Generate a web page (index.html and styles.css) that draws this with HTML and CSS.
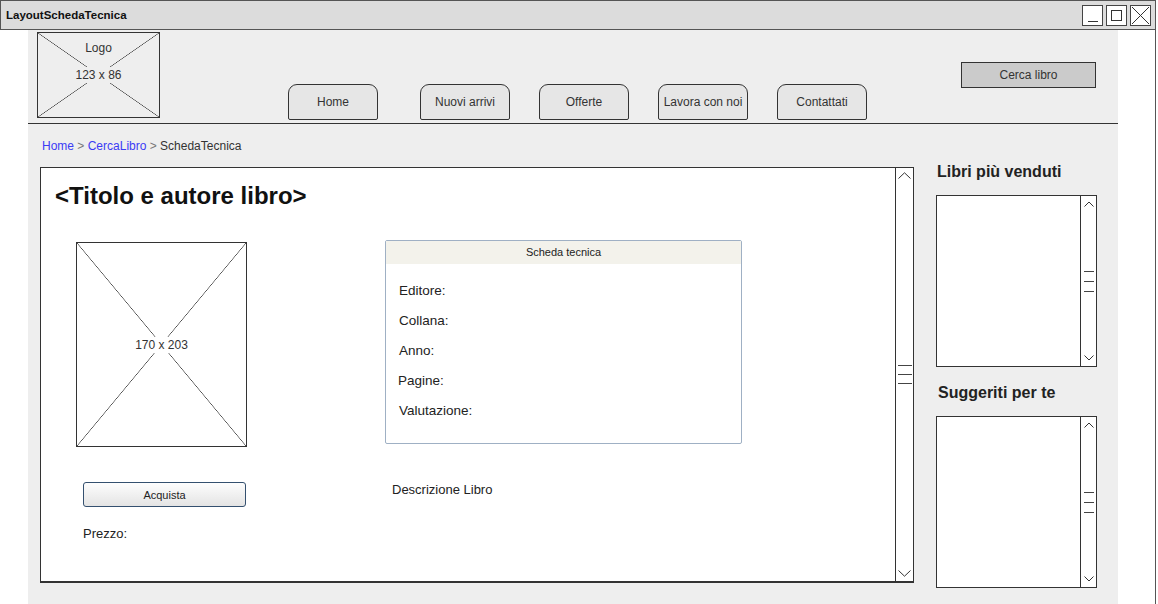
FILE: index.html
```html
<!DOCTYPE html>
<html lang="it">
<head>
<meta charset="utf-8">
<title>LayoutSchedaTecnica</title>
<link rel="stylesheet" href="styles.css">
</head>
<body>
<div class="window">
  <div class="titlebar">
    <span class="wtitle">LayoutSchedaTecnica</span>
    <div class="wctrls">
      <span class="wbtn"><svg viewBox="0 0 19 19"><line x1="5" y1="15.5" x2="15" y2="15.5" stroke="#333" stroke-width="1"/></svg></span>
      <span class="wbtn"><svg viewBox="0 0 19 19"><rect x="4.5" y="4.5" width="10" height="10" fill="none" stroke="#333" stroke-width="1"/></svg></span>
      <span class="wbtn"><svg viewBox="0 0 19 19"><line x1="1" y1="1" x2="18" y2="18" stroke="#333" stroke-width="1"/><line x1="18" y1="1" x2="1" y2="18" stroke="#333" stroke-width="1"/></svg></span>
    </div>
  </div>
  <div class="wbody">
    <div class="canvas">
      <header class="hdr">
        <div class="logo">
          <span class="l1">Logo</span>
          <span class="l2">123 x 86</span>
        </div>
        <nav class="tabs">
          <span class="tab">Home</span>
          <span class="tab gap">Nuovi arrivi</span>
          <span class="tab">Offerte</span>
          <span class="tab">Lavora con noi</span>
          <span class="tab">Contattati</span>
        </nav>
        <button class="search">Cerca libro</button>
      </header>
      <div class="crumbs"><a class="lnk">Home</a><span class="sep"> &gt; </span><a class="lnk">CercaLibro</a><span class="sep"> &gt; </span><span class="cur">SchedaTecnica</span></div>
      <div class="content">
        <section class="panel">
          <div class="panel-body">
            <h1 class="title">&lt;Titolo e autore libro&gt;</h1>
            <div class="cols">
              <div class="colL">
                <div class="ph"><span class="phl">170 x 203</span></div>
                <button class="buy">Acquista</button>
                <p class="price">Prezzo:</p>
              </div>
              <div class="colR">
                <div class="sheet">
                  <div class="sheet-h">Scheda tecnica</div>
                  <ul class="fields">
                    <li>Editore:</li>
                    <li>Collana:</li>
                    <li>Anno:</li>
                    <li class="pag">Pagine:</li>
                    <li>Valutazione:</li>
                  </ul>
                </div>
                <p class="desc">Descrizione Libro</p>
              </div>
            </div>
          </div>
          <div class="vscroll">
            <svg class="chev" viewBox="0 0 13 7"><polyline points="0.5,6.5 6.5,0.8 12.5,6.5" fill="none" stroke="#333" stroke-width="1"/></svg>
            <div class="thumb"><span></span><span></span><span></span></div>
            <svg class="chev" viewBox="0 0 13 7"><polyline points="0.5,0.5 6.5,6.2 12.5,0.5" fill="none" stroke="#333" stroke-width="1"/></svg>
          </div>
        </section>
        <aside class="side">
          <h2 class="stitle">Libri più venduti</h2>
          <div class="sbox">
            <div class="sscroll">
              <svg class="schev" viewBox="0 0 10 6"><polyline points="0.5,5.5 5,1 9.5,5.5" fill="none" stroke="#333" stroke-width="1"/></svg>
              <div class="sthumb"><span></span><span></span><span></span></div>
              <svg class="schev" viewBox="0 0 10 6"><polyline points="0.5,0.5 5,5 9.5,0.5" fill="none" stroke="#333" stroke-width="1"/></svg>
            </div>
          </div>
          <h2 class="stitle s2">Suggeriti per te</h2>
          <div class="sbox">
            <div class="sscroll">
              <svg class="schev" viewBox="0 0 10 6"><polyline points="0.5,5.5 5,1 9.5,5.5" fill="none" stroke="#333" stroke-width="1"/></svg>
              <div class="sthumb"><span></span><span></span><span></span></div>
              <svg class="schev" viewBox="0 0 10 6"><polyline points="0.5,0.5 5,5 9.5,0.5" fill="none" stroke="#333" stroke-width="1"/></svg>
            </div>
          </div>
        </aside>
      </div>
    </div>
  </div>
</div>
</body>
</html>
```
FILE: styles.css
```css
* { box-sizing: border-box; }
html, body {
  margin: 0;
  padding: 0;
  width: 1158px;
  height: 604px;
  overflow: hidden;
  background: #fff;
}
body {
  font-family: "Liberation Sans", Arial, sans-serif;
  color: #222;
}
.window {
  width: 1156px;
  height: 604px;
  display: flex;
  flex-direction: column;
}
.titlebar {
  height: 30px;
  flex: none;
  display: flex;
  align-items: center;
  background: #dcdcdc;
  border: 1px solid #555;
}
.wtitle {
  font-weight: bold;
  font-size: 11.5px;
  margin-left: 5px;
  color: #111;
}
.wctrls {
  margin-left: auto;
  margin-right: 4px;
  display: flex;
  gap: 3px;
}
.wbtn {
  width: 21px;
  height: 21px;
  background: #fff;
  border: 1px solid #444;
  display: flex;
}
.wbtn svg { width: 19px; height: 19px; }
.wbody {
  flex: 1;
  display: flex;
  border-right: 1px solid #555;
}
.canvas {
  margin-left: 28px;
  width: 1090px;
  background: #eeeeee;
  display: flex;
  flex-direction: column;
}
.hdr {
  height: 94px;
  flex: none;
  display: flex;
  align-items: flex-start;
  border-bottom: 1px solid #333;
}
.logo {
  margin: 2px 0 0 9px;
  width: 123px;
  height: 86px;
  border: 1px solid #333;
  display: flex;
  flex-direction: column;
  align-items: center;
  padding-top: 7px;
  font-size: 12px;
  color: #333;
  background:
    linear-gradient(to top right, transparent calc(50% - 0.6px), #444 50%, transparent calc(50% + 0.6px)),
    linear-gradient(to bottom right, transparent calc(50% - 0.6px), #444 50%, transparent calc(50% + 0.6px));
}
.logo .l1 { line-height: 16px; }
.logo .l2 {
  line-height: 16px;
  margin-top: 11px;
  background: #eeeeee;
  padding: 0 2px;
}
.tabs {
  display: flex;
  gap: 29px;
  margin: 54px 0 0 128px;
}
.tab {
  width: 90px;
  height: 36px;
  border: 1px solid #333;
  border-radius: 9px 9px 2px 2px;
  background: #e6e6e6;
  font-size: 12px;
  color: #333;
  display: flex;
  align-items: center;
  justify-content: center;
  white-space: nowrap;
}
.tab.gap { margin-left: 13px; }
.search {
  margin: 32px 22px 0 auto;
  width: 135px;
  height: 26px;
  border: 1px solid #333;
  background: #cbcbcb;
  font-family: "Liberation Sans", Arial, sans-serif;
  font-size: 12px;
  color: #333;
  padding: 0;
}
.crumbs {
  margin: 14px 0 0 14px;
  font-size: 12px;
  line-height: 16px;
  color: #333;
}
.lnk { color: #3b3bf5; }
.sep { color: #777; }
.content {
  display: flex;
  align-items: flex-start;
  margin-top: 9px;
  padding-left: 12px;
}
.panel {
  margin-top: 4px;
  width: 874px;
  height: 416px;
  border: 1px solid #333;
  border-bottom-width: 2px;
  background: #fff;
  display: flex;
}
.panel-body { flex: 1; }
.title {
  margin: 14px 0 0 14px;
  font-size: 24px;
  line-height: 28px;
  font-weight: bold;
  color: #111;
}
.cols {
  display: flex;
  margin-top: 30px;
}
.colL {
  margin-left: 35px;
  width: 171px;
  display: flex;
  flex-direction: column;
}
.ph {
  margin-top: 2px;
  height: 205px;
  border: 1px solid #333;
  display: flex;
  align-items: center;
  justify-content: center;
  font-size: 12px;
  color: #333;
  background:
    linear-gradient(to top right, transparent calc(50% - 0.6px), #444 50%, transparent calc(50% + 0.6px)),
    linear-gradient(to bottom right, transparent calc(50% - 0.6px), #444 50%, transparent calc(50% + 0.6px)),
    #fff;
}
.phl { background: #fff; padding: 0 2px; line-height: 16px; }
.buy {
  margin: 35px 0 0 7px;
  width: 163px;
  height: 25px;
  border: 1px solid #34506f;
  border-radius: 3px;
  background: linear-gradient(#fdfdfd, #e4e4e4);
  font-family: "Liberation Sans", Arial, sans-serif;
  font-size: 11px;
  color: #222;
  padding: 0;
}
.price {
  margin: 19px 0 0 7px;
  font-size: 13px;
  line-height: 16px;
}
.colR {
  margin-left: 138px;
  width: 357px;
}
.sheet {
  height: 204px;
  border: 1px solid #9fb0c4;
  border-radius: 2px;
  background: #fff;
}
.sheet-h {
  height: 23px;
  background: #f3f2eb;
  font-size: 11px;
  line-height: 23px;
  text-align: center;
  color: #222;
}
.fields {
  list-style: none;
  margin: 19px 0 0;
  padding: 0 0 0 13px;
  display: flex;
  flex-direction: column;
  gap: 14px;
  font-size: 13.5px;
  line-height: 16px;
}
.fields .pag { margin-left: -1px; }
.desc {
  margin: 38px 0 0 7px;
  font-size: 13px;
  line-height: 16px;
}
.vscroll {
  width: 18px;
  border-left: 1px solid #333;
  display: flex;
  flex-direction: column;
  align-items: center;
  justify-content: space-between;
  padding: 4px 0 4px;
}
.chev { width: 13px; height: 7px; display: block; }
.thumb, .sthumb {
  display: flex;
  flex-direction: column;
  gap: 8px;
}
.thumb span {
  display: block;
  width: 14px;
  height: 1px;
  background: #444;
}
.side {
  margin-left: 22px;
  width: 161px;
}
.stitle {
  margin: 0;
  font-size: 16px;
  line-height: 18px;
  font-weight: bold;
  color: #222;
  padding-left: 1px;
}
.stitle.s2 { margin-top: 17px; padding-left: 2px; }
.sbox {
  margin-top: 14px;
  height: 172px;
  border: 1px solid #333;
  background: #fff;
  display: flex;
  justify-content: flex-end;
}
.sscroll {
  width: 16px;
  border-left: 1px solid #333;
  display: flex;
  flex-direction: column;
  align-items: center;
  justify-content: space-between;
  padding: 5px 0 5px;
}
.schev { width: 10px; height: 6px; display: block; }
.sthumb { gap: 9px; }
.sthumb span {
  display: block;
  width: 10px;
  height: 1px;
  background: #444;
}
```
